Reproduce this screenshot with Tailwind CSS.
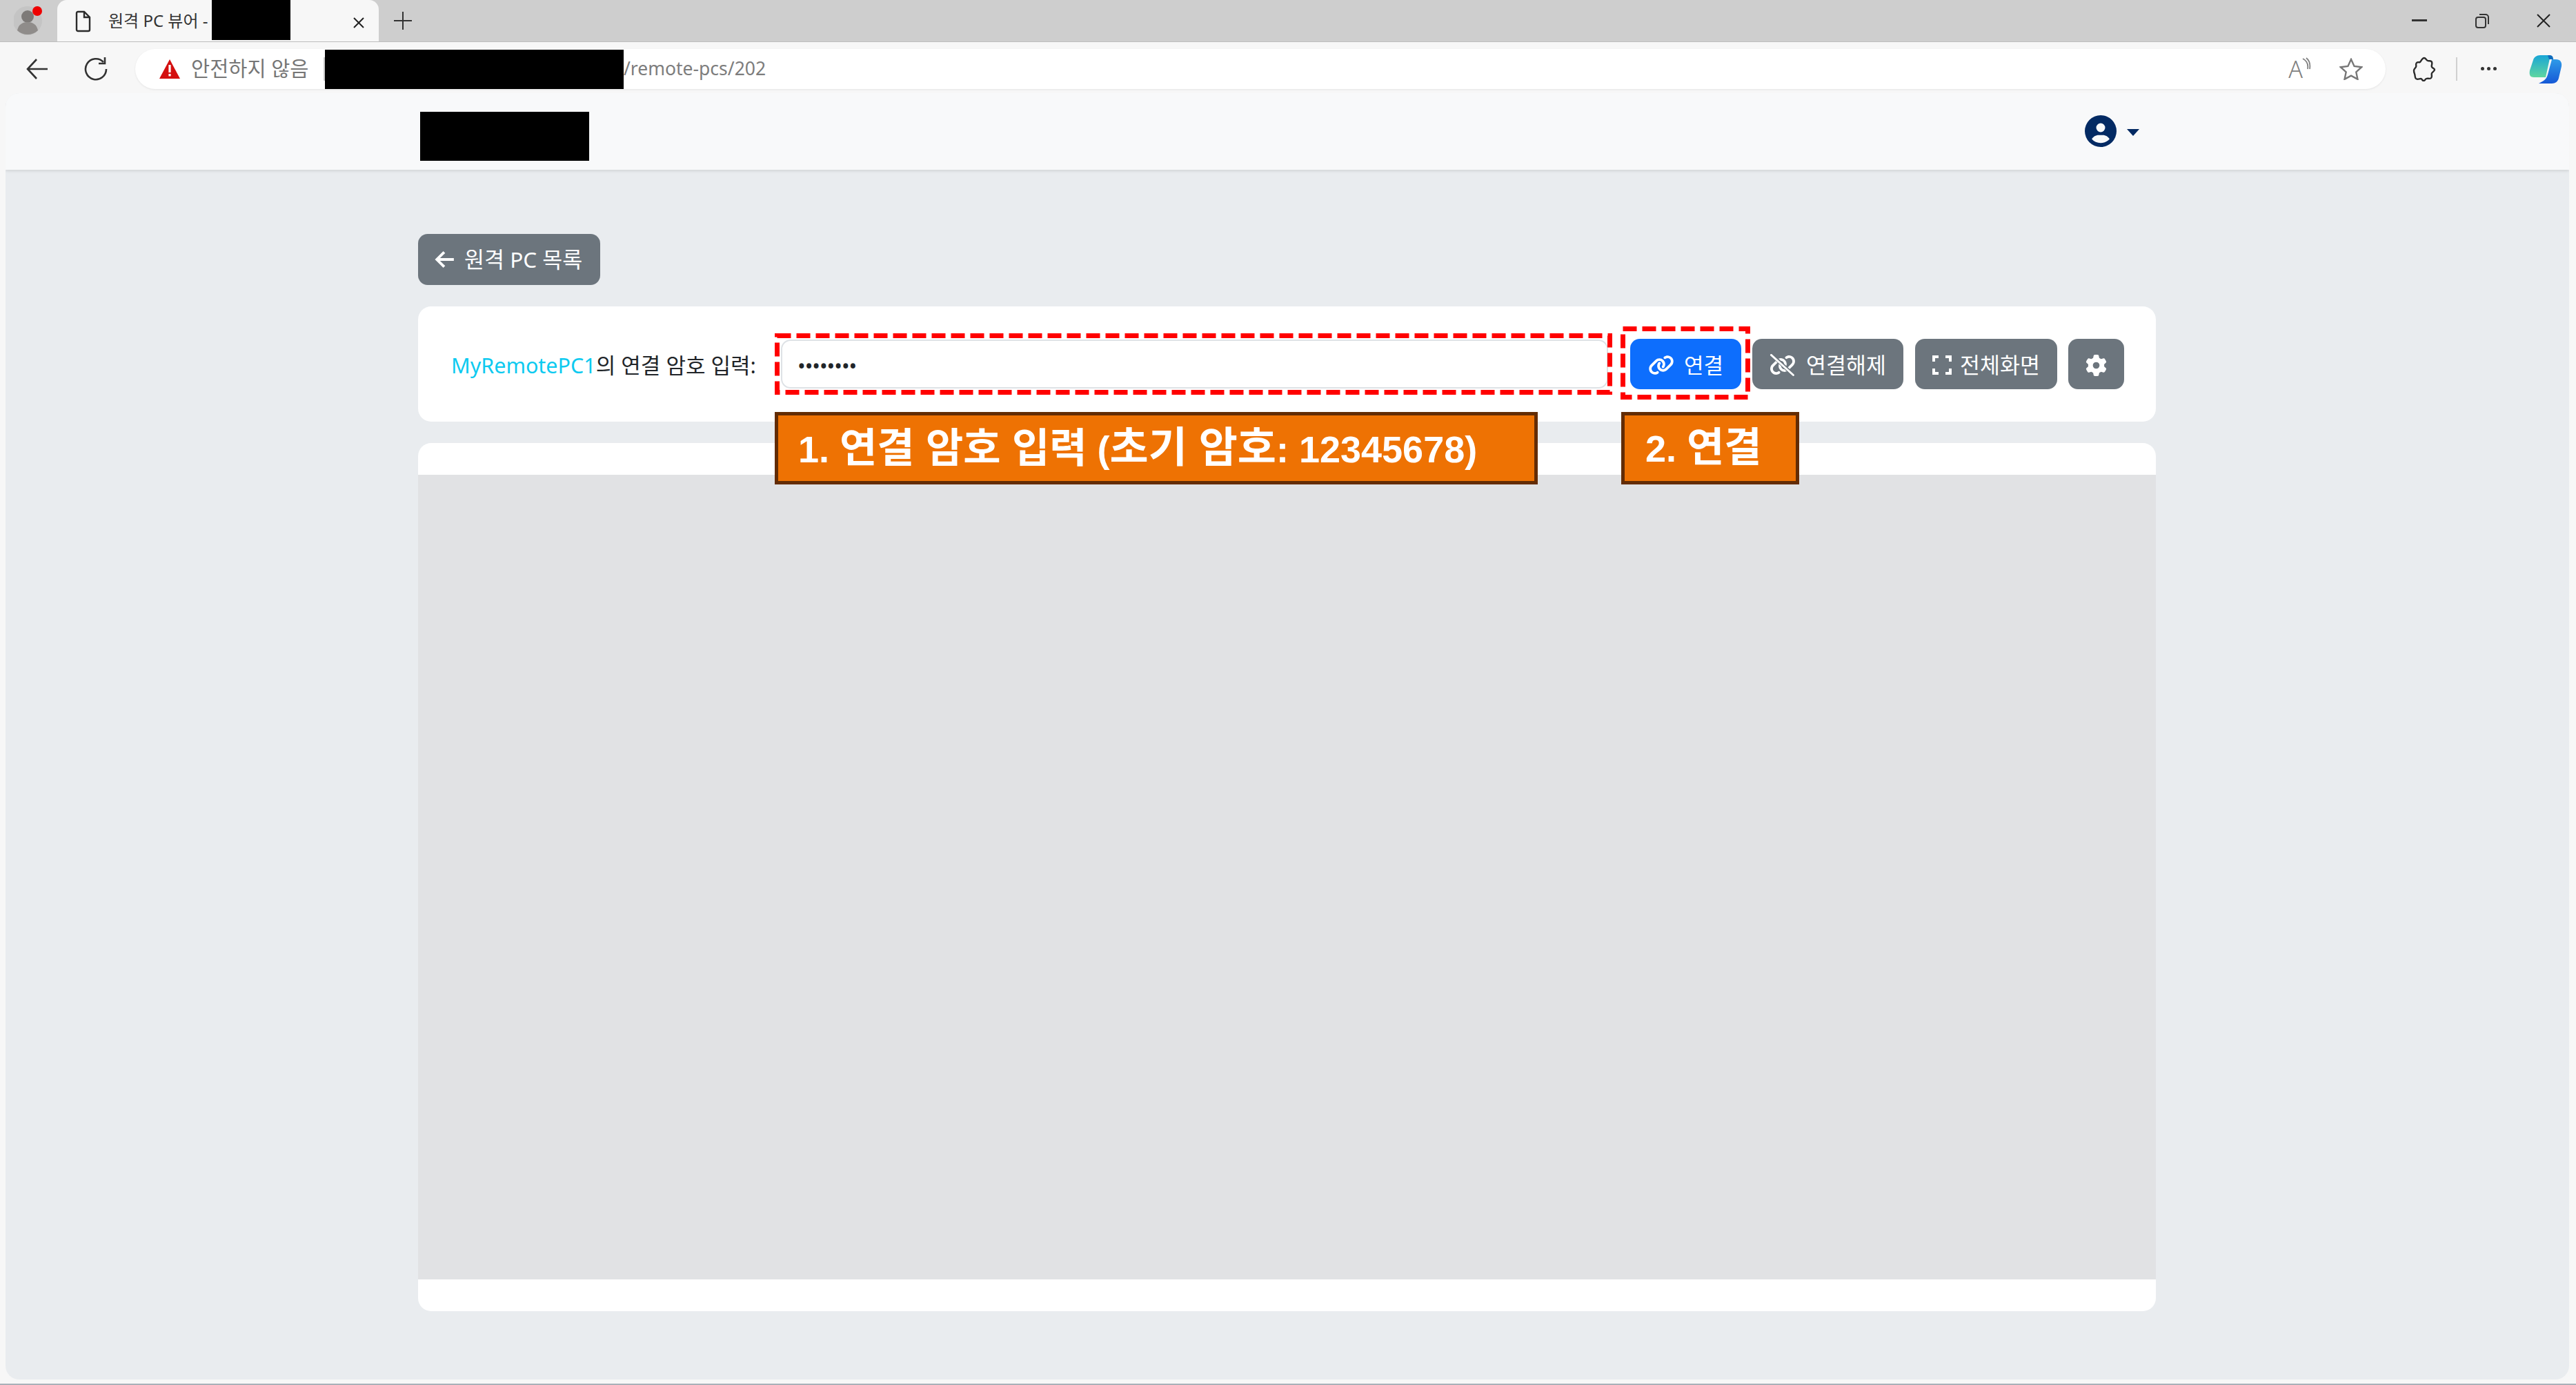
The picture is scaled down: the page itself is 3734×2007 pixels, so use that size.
<!DOCTYPE html>
<html lang="ko">
<head>
<meta charset="UTF-8">
<title>원격 PC 뷰어</title>
<script src="https://cdn.jsdelivr.net/npm/@tailwindcss/browser@4"></script>
</head>
<body class="bg-[#f7f7f7]">
<div class="relative w-[3734px] h-[2007px] overflow-hidden flex flex-col font-['Noto_Sans','Noto_Sans_CJK_KR',sans-serif]">

  <!-- Tab strip -->
  <div class="h-[61px] shrink-0 bg-[#cecece] flex items-end border-b border-[#bdbdbd]">
    <div class="w-[83px] h-full flex items-center justify-center">
      <svg class="w-[44px] h-[50px]" viewBox="0 0 44 50">
        <circle cx="20" cy="25" r="21" fill="#c4c4c4"/>
        <ellipse cx="20" cy="19" rx="9" ry="9" fill="#7d7a78"/>
        <path d="M5 39c2-9 8-12 15-12s13 3 15 12c-8 8-22 8-30 0z" fill="#8f8c8a"/>
        <circle cx="34" cy="11" r="7" fill="#ee0000"/>
      </svg>
    </div>
    <div class="w-[466px] h-full bg-[#f7f7f7] rounded-t-[14px] flex items-start pl-[25px]">
      <svg class="w-[24px] h-[32px] mt-[15px]" viewBox="0 0 24 32" fill="none" stroke="#2b2b2b" stroke-width="2.4"><path d="M3 4a2 2 0 0 1 2-2h9l8 8v18a2 2 0 0 1-2 2H5a2 2 0 0 1-2-2z"/><path d="M14 2v8h8"/></svg>
      <span class="ml-[25px] mt-[14px] text-[24px] leading-[32px] text-[#333] whitespace-nowrap w-[150px]">원격 PC 뷰어 -</span>
      <div class="w-[114px] h-[58px] bg-black"></div>
      <svg class="w-[18px] h-[18px] mt-[24px] ml-[90px]" viewBox="0 0 18 18" stroke="#222" stroke-width="2"><path d="M2 2l14 14M16 2L2 16"/></svg>
    </div>
    <div class="h-full flex items-center ml-[21px]">
      <svg class="w-[28px] h-[28px]" viewBox="0 0 28 28" stroke="#333" stroke-width="2"><path d="M14 1v26M1 14h26"/></svg>
    </div>
    <div class="ml-auto h-full flex items-center">
      <svg class="w-[22px] h-[4px] mr-[69px]" viewBox="0 0 22 4"><rect width="22" height="3" fill="#333"/></svg>
      <svg class="w-[22px] h-[24px] mr-[67px]" viewBox="0 0 22 24" fill="none" stroke="#333" stroke-width="2"><rect x="2" y="7" width="14" height="15" rx="3"/><path d="M7 3h9a4 4 0 0 1 4 4v10"/></svg>
      <svg class="w-[22px] h-[22px] mr-[36px]" viewBox="0 0 22 22" stroke="#222" stroke-width="2"><path d="M2 2l18 18M20 2L2 20"/></svg>
    </div>
  </div>

  <!-- Toolbar -->
  <div class="h-[74px] shrink-0 flex items-center pt-[3px] pr-[14px]">
    <svg class="ml-[37px] w-[34px] h-[34px]" viewBox="0 0 34 34" fill="none" stroke="#333" stroke-width="2.6"><path d="M32 17H3M16 3L3 17l13 14"/></svg>
    <svg class="ml-[50px] w-[36px] h-[36px]" viewBox="0 0 36 36" fill="none" stroke="#333" stroke-width="2.6"><path d="M29 8a15 15 0 1 0 4 10"/><path d="M31 1v9h-9"/></svg>
    <div class="ml-[39px] w-[3262px] h-[58px] bg-white rounded-full shadow-[0_1px_3px_rgba(0,0,0,0.08)] flex items-center">
      <svg class="ml-[34px] w-[32px] h-[30px]" viewBox="0 0 32 30"><path d="M16 1L31 29H1z" fill="#d40f0f"/><rect x="14.4" y="9" width="3.2" height="11" fill="#fff"/><rect x="14.4" y="22" width="3.2" height="3.4" fill="#fff"/></svg>
      <span class="ml-[15px] w-[170px] text-[29.5px] text-[#767676] whitespace-nowrap">안전하지 않음</span>
      <div class="ml-[22px] w-[2px] h-[34px] bg-[#c8c8c8]"></div>
      <div class="w-[433px] h-[57px] bg-black mt-[2px]"></div>
      <span class="text-[26.5px] text-[#7d7d7d] whitespace-nowrap">/remote-pcs/202</span>
      <div class="ml-auto mr-[41px] flex items-start text-[#808080]">
        <span class="text-[34px] leading-[34px] font-light">A</span>
        <svg class="w-[14px] h-[20px] -ml-[2px]" viewBox="0 0 14 20" fill="none" stroke="#808080" stroke-width="1.8"><path d="M2 2c6 3 8 9 7 15M7 1c5 4 6 10 5 16"/></svg>
      </div>
      <svg class="mr-[33px] w-[34px] h-[32px]" viewBox="0 0 34 32" fill="none" stroke="#777" stroke-width="2.4"><path d="M17 2l4.6 10 10.6 1.2-7.9 7.2 2.2 10.5L17 25.6 7.5 30.9l2.2-10.5L1.8 13.2 12.4 12z"/></svg>
    </div>
    <svg class="ml-[39px] w-[34px] h-[36px]" viewBox="0 0 34 36" fill="none" stroke="#2b2b2b" stroke-width="2.4"><path d="M17 2c2 0 3 3 5 4s5-1 6 2-1 5 0 7 4 2 4 4-3 3-4 5 1 5-1 7-5 0-7 1-2 3-4 3-2-3-4-3-5 2-7 0-1-5-2-7-1-3-1-5 2-3 3-5-1-4 1-6 4 0 5-1 3-6 6-6z"/></svg>
    <div class="ml-[29px] w-[2px] h-[34px] bg-[#d0d0d0]"></div>
    <div class="ml-[34px] flex gap-[4px]"><span class="w-[5px] h-[5px] rounded-full bg-[#333]"></span><span class="w-[5px] h-[5px] rounded-full bg-[#333]"></span><span class="w-[5px] h-[5px] rounded-full bg-[#333]"></span></div>
    <svg class="ml-[47px] w-[48px] h-[44px]" viewBox="0 0 48 44">
      <defs>
        <linearGradient id="cpa" x1="0" y1="0" x2="0" y2="1"><stop offset="0" stop-color="#19a6d6"/><stop offset="1" stop-color="#5fd6a0"/></linearGradient>
        <linearGradient id="cpb" x1="0" y1="0" x2="0" y2="1"><stop offset="0" stop-color="#2f9be8"/><stop offset="1" stop-color="#1558d6"/></linearGradient>
      </defs>
      <path d="M16 2h15L24 34H7C1 34 0 30 1 24L6 9c1-4 5-7 10-7z" fill="url(#cpa)"/>
      <path d="M33 8h6c6 0 9 4 8 10l-4 17c-1 5-5 8-10 8H14l7-4c3-2 5-5 6-9z" fill="url(#cpb)"/>
      <path d="M27 2h3c3 0 5 2 5 6h-6z" fill="#0f6cbd"/>
    </svg>
  </div>

  <!-- Page -->
  <main class="ml-[8px] w-[3716px] h-[1864px] shrink-0 bg-[#e9ecef] rounded-[20px] overflow-hidden">
    <nav class="h-[111px] bg-[#f8f9fa] shadow-[0_2px_4px_rgba(0,0,0,0.1)]">
      <div class="w-[2519px] ml-[598px] h-full flex items-start">
        <div class="ml-[3px] mt-[27px] w-[245px] h-[71px] bg-black"></div>
        <div class="ml-auto mr-[24px] mt-[32px] flex items-center gap-[15px]">
          <svg class="w-[46px] h-[46px]" viewBox="0 0 512 512" fill="#032a63"><path d="M399 384.2C376.9 345.8 335.4 320 288 320H224c-47.4 0-88.9 25.8-111 64.2c35.2 39.2 86.2 63.8 143 63.8s107.8-24.7 143-63.8zM0 256a256 256 0 1 1 512 0A256 256 0 1 1 0 256zm256 16a72 72 0 1 0 0-144 72 72 0 1 0 0 144z"/></svg>
          <span class="mt-[4px] w-0 h-0 border-x-[9px] border-x-transparent border-t-[10px] border-t-[#032a63]"></span>
        </div>
      </div>
    </nav>

    <div class="w-[2519px] ml-[598px] pt-[93px] flex flex-col items-start">
      <button class="w-[264px] h-[74px] rounded-[14px] bg-[#6c757d] text-white text-[31.5px] flex items-center pl-[24px] gap-[13px]">
        <svg class="w-[30px] h-[30px]" viewBox="0 0 28 28" fill="none" stroke="#fff" stroke-width="3.6"><path d="M26 14H4M13 4L3 14l10 10"/></svg>
        원격 PC 목록
      </button>

      <section class="mt-[31px] w-full h-[167px] bg-white rounded-[19px] flex items-center pl-[48px] pr-[46px]">
        <label class="pt-[3px] text-[31px] text-[#212529] whitespace-nowrap w-[478px]"><span class="text-[30.5px] text-[#0dcaf0]">MyRemotePC1</span>의 연결 암호 입력:</label>
        <div class="w-[1199px] h-[71px] pt-[6px] rounded-[14px] border-2 border-[#dee2e6] bg-white flex items-center pl-[22px] text-[#212529] text-[31px] tracking-[-1px]">••••••••</div>
        <button class="ml-[32px] w-[161px] h-[73px] pt-[3px] rounded-[14px] bg-[#0d6efd] text-white text-[31px] flex items-center justify-center gap-[14px]">
          <svg class="w-[38px] h-[30px]" viewBox="0 0 640 512" fill="#fff"><path d="M579.8 267.7c56.5-56.5 56.5-148 0-204.5c-50-50-128.8-56.5-186.3-15.4l-1.6 1.1c-14.4 10.3-17.7 30.3-7.4 44.6s30.3 17.7 44.6 7.4l1.6-1.1c32.1-22.9 76-19.3 103.8 8.6c31.5 31.5 31.5 82.5 0 114L422.3 334.8c-31.5 31.5-82.5 31.5-114 0c-27.9-27.9-31.5-71.8-8.6-103.8l1.1-1.6c10.3-14.4 6.9-34.4-7.4-44.6s-34.4-6.9-44.6 7.4l-1.1 1.6C206.5 251.2 213 330 263 380c56.5 56.5 148 56.5 204.5 0L579.8 267.7zM60.2 244.3c-56.5 56.5-56.5 148 0 204.5c50 50 128.8 56.5 186.3 15.4l1.6-1.1c14.4-10.3 17.7-30.3 7.4-44.6s-30.3-17.7-44.6-7.4l-1.6 1.1c-32.1 22.9-76 19.3-103.8-8.6C74 372 74 321 105.5 289.5L217.7 177.2c31.5-31.5 82.5-31.5 114 0c27.9 27.9 31.5 71.8 8.6 103.9l-1.1 1.6c-10.3 14.4-6.9 34.4 7.4 44.6s34.4 6.9 44.6-7.4l1.1-1.6C433.5 260.8 427 182 377 132c-56.5-56.5-148-56.5-204.5 0L60.2 244.3z"/></svg>
          연결
        </button>
        <button class="ml-[16px] w-[219px] h-[73px] pt-[3px] rounded-[14px] bg-[#6c757d] text-white text-[31.5px] flex items-center justify-center gap-[15px]">
          <svg class="w-[38px] h-[32px]" viewBox="0 0 640 512" fill="#fff"><path d="M579.8 267.7c56.5-56.5 56.5-148 0-204.5c-50-50-128.8-56.5-186.3-15.4l-1.6 1.1c-14.4 10.3-17.7 30.3-7.4 44.6s30.3 17.7 44.6 7.4l1.6-1.1c32.1-22.9 76-19.3 103.8 8.6c31.5 31.5 31.5 82.5 0 114L422.3 334.8c-31.5 31.5-82.5 31.5-114 0c-27.9-27.9-31.5-71.8-8.6-103.8l1.1-1.6c10.3-14.4 6.9-34.4-7.4-44.6s-34.4-6.9-44.6 7.4l-1.1 1.6C206.5 251.2 213 330 263 380c56.5 56.5 148 56.5 204.5 0L579.8 267.7zM60.2 244.3c-56.5 56.5-56.5 148 0 204.5c50 50 128.8 56.5 186.3 15.4l1.6-1.1c14.4-10.3 17.7-30.3 7.4-44.6s-30.3-17.7-44.6-7.4l-1.6 1.1c-32.1 22.9-76 19.3-103.8-8.6C74 372 74 321 105.5 289.5L217.7 177.2c31.5-31.5 82.5-31.5 114 0c27.9 27.9 31.5 71.8 8.6 103.9l-1.1 1.6c-10.3 14.4-6.9 34.4 7.4 44.6s34.4 6.9 44.6-7.4l1.1-1.6C433.5 260.8 427 182 377 132c-56.5-56.5-148-56.5-204.5 0L60.2 244.3z"/><path d="M60 10l520 490" stroke="#6c757d" stroke-width="90"/><path d="M40 10l540 490" stroke="#fff" stroke-width="48" stroke-linecap="round"/></svg>
          연결해제
        </button>
        <button class="ml-[17px] w-[206px] h-[73px] pt-[3px] rounded-[14px] bg-[#6c757d] text-white text-[31.5px] flex items-center justify-center gap-[12px]">
          <svg class="w-[28px] h-[28px]" viewBox="0 0 28 28" fill="none" stroke="#fff" stroke-width="4"><path d="M2 9V2h7M19 2h7v7M26 19v7h-7M9 26H2v-7"/></svg>
          전체화면
        </button>
        <button class="ml-[16px] w-[81px] h-[73px] pt-[3px] rounded-[14px] bg-[#6c757d] flex items-center justify-center">
          <svg class="w-[31px] h-[31px]" viewBox="0 0 512 512" fill="#fff"><path d="M495.9 166.6c3.2 8.7 .5 18.4-6.4 24.6l-43.3 39.4c1.1 8.3 1.7 16.8 1.7 25.4s-.6 17.1-1.7 25.4l43.3 39.4c6.9 6.2 9.6 15.9 6.4 24.6c-4.4 11.9-9.7 23.3-15.8 34.3l-4.7 8.1c-6.6 11-14 21.4-22.1 31.2c-5.9 7.2-15.7 9.6-24.5 6.8l-55.7-17.7c-13.4 10.3-28.2 18.9-44 25.4l-12.5 57.1c-2 9.1-9 16.3-18.2 17.8c-13.8 2.3-28 3.5-42.5 3.5s-28.7-1.2-42.5-3.5c-9.2-1.5-16.2-8.7-18.2-17.8l-12.5-57.1c-15.8-6.5-30.6-15.1-44-25.4L83.1 425.9c-8.8 2.8-18.6 .3-24.5-6.8c-8.1-9.8-15.5-20.2-22.1-31.2l-4.7-8.1c-6.1-11-11.4-22.4-15.8-34.3c-3.2-8.7-.5-18.4 6.4-24.6l43.3-39.4C64.6 273.1 64 264.6 64 256s.6-17.1 1.7-25.4L22.4 191.2c-6.9-6.2-9.6-15.9-6.4-24.6c4.4-11.9 9.7-23.3 15.8-34.3l4.7-8.1c6.6-11 14-21.4 22.1-31.2c5.9-7.2 15.7-9.6 24.5-6.8l55.7 17.7c13.4-10.3 28.2-18.9 44-25.4l12.5-57.1c2-9.1 9-16.3 18.2-17.8C227.3 1.2 241.5 0 256 0s28.7 1.2 42.5 3.5c9.2 1.5 16.2 8.7 18.2 17.8l12.5 57.1c15.8 6.5 30.6 15.1 44 25.4l55.7-17.7c8.8-2.8 18.6-.3 24.5 6.8c8.1 9.8 15.5 20.2 22.1 31.2l4.7 8.1c6.1 11 11.4 22.4 15.8 34.3zM256 336a80 80 0 1 0 0-160 80 80 0 1 0 0 160z"/></svg>
        </button>
      </section>

      <section class="mt-[31px] w-full h-[1258px] bg-white rounded-[19px] py-[46px]">
        <div class="h-full bg-[#e1e2e4]"></div>
      </section>
    </div>
  </main>

  <div class="mt-auto h-[2px] bg-[#a9b1b8]"></div>

  <!-- Annotations drawn over the screenshot -->
  <svg class="absolute left-[1123px] top-[483px] w-[1214px] h-[89px]" viewBox="0 0 1214 89" fill="none"><rect x="3.5" y="3.5" width="1207" height="82" stroke="#ff0000" stroke-width="7" stroke-dasharray="20 8"/></svg>
  <svg class="absolute left-[2349px] top-[473px] w-[188px] h-[106px]" viewBox="0 0 188 106" fill="none"><rect x="3.5" y="3.5" width="181" height="99" stroke="#ff0000" stroke-width="7" stroke-dasharray="20 8"/></svg>
  <div class="absolute left-[1123px] top-[597px] w-[1106px] h-[105px] bg-[#ee7203] border-[5px] border-[#632c04] flex items-center pl-[29px] text-white font-bold text-[54px] whitespace-pre font-['Liberation_Sans','Noto_Sans_CJK_KR',sans-serif]"><p>1. <span class="text-[59px]">연결 암호 입력</span> (<span class="text-[61px]">초기 암호</span>: 12345678)</p></div>
  <div class="absolute left-[2350px] top-[597px] w-[258px] h-[105px] bg-[#ee7203] border-[5px] border-[#632c04] flex items-center pl-[30px] text-white font-bold text-[54px] whitespace-pre font-['Liberation_Sans','Noto_Sans_CJK_KR',sans-serif]"><p>2. <span class="text-[59px]">연결</span></p></div>
</div>
</body>
</html>
